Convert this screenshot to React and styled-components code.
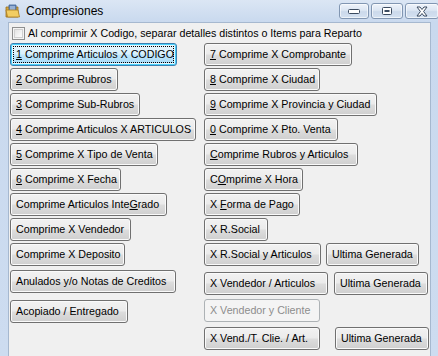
import React from "react";
import styled, { createGlobalStyle, css } from "styled-components";

const GlobalStyle = createGlobalStyle`
  html, body {
    margin: 0;
    padding: 0;
    width: 438px;
    height: 356px;
    overflow: hidden;
    background: #cddcf0;
  }
  * {
    box-sizing: border-box;
  }
`;

const leftButtons = [
  { label: <><u>1</u> Comprime Articulos X CODIGO</>, w: 167, focused: true },
  { label: <><u>2</u> Comprime Rubros</>, w: 108 },
  { label: <><u>3</u> Comprime Sub-Rubros</>, w: 130 },
  { label: <><u>4</u> Comprime Articulos X ARTICULOS</>, w: 186 },
  { label: <><u>5</u> Comprime X Tipo de Venta</>, w: 148 },
  { label: <><u>6</u> Comprime X Fecha</>, w: 111 },
  { label: <>Comprime Articulos Inte<u>G</u>rado</>, w: 157 },
  { label: <>Comprime X Vendedor</>, w: 121 },
  { label: <>Comprime X Deposito</>, w: 115 },
  { label: <>Anulados y/o Notas de Creditos</>, w: 166, top: 2 },
  { label: <>Acopiado / Entregado</>, w: 118, top: 5 },
];

const rightButtons = [
  { label: <><u>7</u> Comprime X Comprobante</>, w: 148 },
  { label: <><u>8</u> Comprime X Ciudad</>, w: 116 },
  { label: <><u>9</u> Comprime X Provincia y Ciudad</>, w: 173 },
  { label: <><u>0</u> Comprime X Pto. Venta</>, w: 134 },
  { label: <><u>C</u>omprime Rubros y Articulos</>, w: 154 },
  { label: <>C<u>O</u>mprime X Hora</>, w: 99 },
  { label: <>X <u>F</u>orma de Pago</>, w: 96 },
  { label: <>X R.Social</>, w: 64 },
  { label: <>X R.Social y Articulos</>, w: 117, extra: { w: 93, gap: 5 } },
  { label: <>X Vendedor / Articulos</>, w: 124, top: 4, extra: { w: 94, gap: 6 } },
  { label: <>X Vendedor y Cliente</>, w: 116, top: 2, disabled: true },
  { label: <>X Vend./T. Clie. / Art.</>, w: 116, top: 3, extra: { w: 94, gap: 15 } },
];

const FolderIcon = () => (
  <svg width="16" height="16" viewBox="0 0 16 16">
    <path d="M1 4 L1 14 L13 14 L13 4 Z" fill="#d9a93a" stroke="#9a7020" strokeWidth="0.8" />
    <path d="M4 2 L11 2 L11 9 L4 9 Z" fill="#6d8fc0" stroke="#3d5f90" strokeWidth="0.8" />
    <path d="M5 4 L10 4 M5 6 L10 6" stroke="#d8e4f4" strokeWidth="0.8" />
    <path d="M1 7 L13 7 L14.5 14 L2.5 14 Z" fill="#f2cd62" stroke="#a87c22" strokeWidth="0.8" />
  </svg>
);

const App = () => {
  return (
    <>
      <GlobalStyle />
      <Window>
        <TitleBar>
          <TitleLeft>
            <FolderIcon />
            <TitleText>Compresiones</TitleText>
          </TitleLeft>
          <Controls>
            <WinBtn $w={30}>
              <svg width="14" height="8" viewBox="0 0 14 8">
                <rect x="1.5" y="2.5" width="11" height="4" rx="1" fill="#fff" stroke="#3b4b60" />
              </svg>
            </WinBtn>
            <WinBtn $w={32}>
              <svg width="12" height="10" viewBox="0 0 12 10">
                <rect x="1.5" y="1.5" width="9" height="7" rx="1" fill="#fff" stroke="#3b4b60" />
                <rect x="3.5" y="4" width="5" height="2" fill="#3b4b60" />
              </svg>
            </WinBtn>
            <WinBtn $w={34}>
              <svg width="14" height="11" viewBox="0 0 14 11">
                <path
                  d="M2 1 L5 1 L7 3.5 L9 1 L12 1 L8.6 5.5 L12 10 L9 10 L7 7.5 L5 10 L2 10 L5.4 5.5 Z"
                  fill="#fff"
                  stroke="#3b4b60"
                  strokeLinejoin="round"
                />
              </svg>
            </WinBtn>
          </Controls>
        </TitleBar>
        <Client>
          <CheckRow>
            <CheckBox />
            <CheckLabel>Al comprimir X Codigo, separar detalles distintos o Items para Reparto</CheckLabel>
          </CheckRow>
          <Columns>
            <Column $width={194}>
              {leftButtons.map((b, i) => (
                <Row key={i} $top={b.top}>
                  <Button $w={b.w} $focused={b.focused}>
                    {b.focused ? <Focus>{b.label}</Focus> : b.label}
                  </Button>
                </Row>
              ))}
            </Column>
            <Column>
              {rightButtons.map((b, i) => (
                <Row key={i} $top={b.top}>
                  <Button $w={b.w} disabled={b.disabled}>
                    {b.label}
                  </Button>
                  {b.extra && (
                    <Button $w={b.extra.w} style={{ marginLeft: b.extra.gap }}>
                      Ultima Generada
                    </Button>
                  )}
                </Row>
              ))}
            </Column>
          </Columns>
        </Client>
      </Window>
    </>
  );
};

export default App;

const Window = styled.div`
  width: 438px;
  height: 356px;
  display: flex;
  flex-direction: column;
  background: linear-gradient(#dbe6f4 0px, #c9d9ee 22px, #cddcf0 100%);
`;

const TitleBar = styled.div`
  height: 22px;
  flex-shrink: 0;
  display: flex;
  align-items: flex-start;
  justify-content: space-between;
  padding: 3px 0 0 5px;
`;

const TitleLeft = styled.div`
  display: flex;
  align-items: center;
  gap: 5px;
  height: 16px;
`;

const TitleText = styled.span`
  font-family: "Liberation Sans", Arial, sans-serif;
  font-size: 12px;
  color: #000;
  line-height: 16px;
`;

const Controls = styled.div`
  display: flex;
  gap: 2px;
  margin-right: -1px;
`;

const WinBtn = styled.div`
  width: ${(p) => p.$w}px;
  height: 16px;
  border: 1px solid #8196b2;
  border-radius: 3px;
  background: linear-gradient(#eef3fa 0%, #dce6f3 45%, #cbd9eb 55%, #d4e1f1 100%);
  box-shadow: inset 0 0 0 1px rgba(255, 255, 255, 0.6);
  display: flex;
  align-items: center;
  justify-content: center;
`;

const Client = styled.div`
  flex: 1;
  margin: 0 7px 0 8px;
  background: #f0f0f0;
  border: 1px solid #a6b8cf;
  border-bottom: none;
  display: flex;
  flex-direction: column;
`;

const CheckRow = styled.div`
  height: 20px;
  display: flex;
  align-items: flex-start;
  padding: 3px 0 0 3px;
  gap: 3px;
`;

const CheckBox = styled.div`
  width: 13px;
  height: 13px;
  border: 1px solid #8e8f8f;
  background: linear-gradient(135deg, #dcdcdc 0%, #f5f5f5 60%, #ffffff 100%);
  box-shadow: inset 0 0 0 1px #f4f4f4, inset 0 0 0 2px #d0d0d0;
  margin-top: 1px;
`;

const CheckLabel = styled.span`
  font-family: "Liberation Sans", Arial, sans-serif;
  font-size: 10.7px;
  line-height: 15px;
  color: #000;
`;

const Columns = styled.div`
  display: flex;
  padding-left: 1px;
`;

const Column = styled.div`
  display: flex;
  flex-direction: column;
  gap: 2px;
  ${(p) => p.$width && css`width: ${p.$width}px;`}
`;

const Row = styled.div`
  display: flex;
  margin-top: ${(p) => p.$top || 0}px;
`;

const Button = styled.button`
  width: ${(p) => p.$w}px;
  height: 23px;
  padding: 0 5px 1px;
  margin: 0;
  text-align: left;
  font-family: "Liberation Sans", Arial, sans-serif;
  font-size: 10.7px;
  color: #000;
  white-space: nowrap;
  border: 1px solid #707070;
  border-radius: 3px;
  background: linear-gradient(#f2f2f2 0%, #ebebeb 48%, #dddddd 52%, #cfcfcf 100%);
  box-shadow: inset 0 0 0 1px #fafafa;
  u {
    text-decoration: underline;
    text-underline-offset: 1px;
  }
  ${(p) =>
    p.$focused &&
    css`
      border-color: #3c7fb1;
      background: linear-gradient(#eaf6fd 0%, #d9f0fc 48%, #bee6fd 52%, #a7d9f5 100%);
      box-shadow: inset 0 0 0 1px #48d1fb, inset 0 0 0 2px #e6f6fd;
      padding: 0 2px;
    `}
  &:disabled {
    border-color: #adb2b5;
    background: #f4f4f4;
    box-shadow: none;
    color: #8d8d8d;
  }
`;

const Focus = styled.span`
  display: block;
  height: 17px;
  border: 1px dotted #000;
  padding: 0 2px;
  line-height: 15px;
`;
